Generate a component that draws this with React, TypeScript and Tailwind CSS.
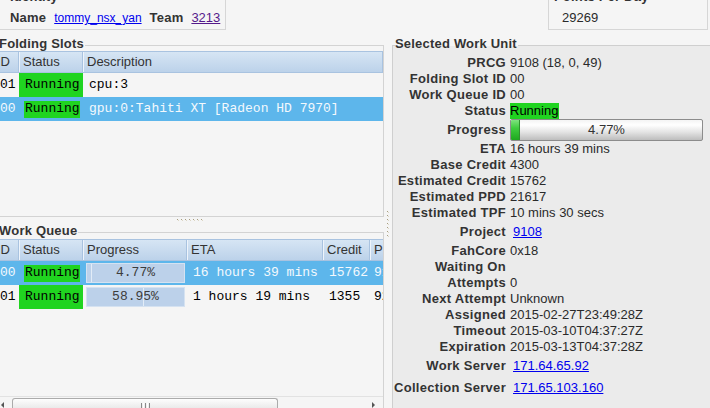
import React from "react";

const MONO = "font-['Liberation_Mono','Courier_New',monospace]";

function Dots({ vertical }: { vertical?: boolean }) {
  const arr = Array.from({ length: 7 });
  return (
    <div className={vertical ? "flex flex-col gap-[3px]" : "flex gap-[3px]"}>
      {arr.map((_, i) => (
        <div key={i} className="w-[1px] h-[1px] bg-[#a89e80] shadow-[1px_1px_0_#dcd6c4]" />
      ))}
    </div>
  );
}

function HeaderCell({ w, children, pl = 3 }: { w: number; children?: React.ReactNode; pl?: number }) {
  return (
    <div
      className="h-full shrink-0 border-l border-l-[#eef4fb] border-r border-r-[#a9c3e0] flex items-center whitespace-nowrap overflow-hidden text-[#333]"
      style={{ width: w, paddingLeft: pl }}
    >
      {children}
    </div>
  );
}

function Status({ selected }: { selected: boolean }) {
  return selected ? (
    <div className="h-full flex items-center pl-[5px]">
      <div className={`bg-[#20d420] h-[17px] w-[56px] flex items-center pl-[1px] text-black ${MONO}`}>Running</div>
    </div>
  ) : (
    <div className={`bg-[#20d420] h-full w-[64px] flex items-center pl-[6px] text-black ${MONO}`}>Running</div>
  );
}

function Cell({ w, children, pl = 6 }: { w: number; children?: React.ReactNode; pl?: number }) {
  return (
    <div className="h-full shrink-0 flex items-center whitespace-nowrap overflow-hidden" style={{ width: w, paddingLeft: pl }}>
      {children}
    </div>
  );
}

function TableBar({ pct, label }: { pct: number; label: string }) {
  return (
    <div className="h-full flex items-center pl-[3px] pr-[2px] w-full">
      <div className="relative w-full h-[20px] bg-[#bcd1ea] border border-[#d5e2f1]">
        <div className="absolute inset-y-0 left-0 border-r border-r-[#e2ecf7]" style={{ width: `${pct}%` }} />
        <div className={`relative h-full flex items-center justify-center text-[#3c3c3c] ${MONO}`}>{label}</div>
      </div>
    </div>
  );
}

function GroupTitle({ children, bg }: { children: React.ReactNode; bg: string }) {
  return (
    <div className={`absolute -top-[10px] leading-[15px] font-bold tracking-[0.2px] text-[#333] pr-[1px] ${bg}`}>
      {children}
    </div>
  );
}

type Row = { label: string; h: number; kind?: "link" | "status" | "progress"; value?: string };

const rows: Row[] = [
  { label: "PRCG", h: 16, value: "9108 (18, 0, 49)" },
  { label: "Folding Slot ID", h: 16, value: "00" },
  { label: "Work Queue ID", h: 16, value: "00" },
  { label: "Status", h: 16, kind: "status" },
  { label: "Progress", h: 22, kind: "progress" },
  { label: "ETA", h: 16, value: "16 hours 39 mins" },
  { label: "Base Credit", h: 16, value: "4300" },
  { label: "Estimated Credit", h: 16, value: "15762" },
  { label: "Estimated PPD", h: 16, value: "21617" },
  { label: "Estimated TPF", h: 16, value: "10 mins 30 secs" },
  { label: "Project", h: 22, kind: "link", value: "9108" },
  { label: "FahCore", h: 16, value: "0x18" },
  { label: "Waiting On", h: 16, value: "" },
  { label: "Attempts", h: 16, value: "0" },
  { label: "Next Attempt", h: 16, value: "Unknown" },
  { label: "Assigned", h: 16, value: "2015-02-27T23:49:28Z" },
  { label: "Timeout", h: 16, value: "2015-03-10T04:37:27Z" },
  { label: "Expiration", h: 16, value: "2015-03-13T04:37:28Z" },
  { label: "Work Server", h: 22, kind: "link", value: "171.64.65.92" },
  { label: "Collection Server", h: 22, kind: "link", value: "171.65.103.160" },
];

function Value({ r }: { r: Row }) {
  if (r.kind === "status")
    return <div className="bg-[#20d420] text-black h-[16px] leading-[16px] pr-[1px]">Running</div>;
  if (r.kind === "progress")
    return (
      <div className="relative w-[193px] h-[22px] rounded-[2px] border border-[#8c8c8c] bg-[linear-gradient(to_bottom,#f4f4f4_0%,#ffffff_25%,#e4e4e4_60%,#bdbdbd_100%)] overflow-hidden">
        <div className="absolute left-0 inset-y-0 w-[9px] border-r border-[#2f8f2f] bg-[linear-gradient(to_bottom,#7fe27f_0%,#3fcc3f_40%,#1fa81f_100%)]" />
        <div className="relative h-full flex items-center justify-center text-[#333]">4.77%</div>
      </div>
    );
  if (r.kind === "link")
    return <span className="ml-[3px] text-[#0000ee] underline">{r.value}</span>;
  return <span>{r.value}</span>;
}

export default function App() {
  return (
    <div className="w-[710px] h-[408px] overflow-hidden bg-[#f5f5f5] text-[13px] leading-[16px] text-[#2a2a2a] font-['Liberation_Sans',Arial,sans-serif] flex flex-col">
      {/* top row */}
      <div className="h-[30px] shrink-0 flex items-start">
        <div className="relative -mt-[2px] -ml-[2px] w-[228px] h-[32px] border border-[#d6d6d6] flex items-baseline gap-[8px] pl-[11px] pt-[11px]">
          <GroupTitle bg="bg-[#f5f5f5]">Identity</GroupTitle>
          <span className="font-bold tracking-[0.2px] text-[#333]">Name</span>
          <span className="text-[12px] text-[#0000ee] underline">tommy_nsx_yan</span>
          <span className="font-bold tracking-[0.2px] text-[#333]">Team</span>
          <span className="text-[#551a8b] underline">3213</span>
        </div>
        <div className="relative ml-auto mr-[2px] -mt-[2px] w-[160px] h-[32px] border border-[#d6d6d6] pl-[13px] pt-[11px]">
          <div className="absolute -top-[10px] left-[4px] leading-[15px] font-bold tracking-[0.2px] text-[#333] bg-[#f5f5f5] px-[1px]">Points Per Day</div>
          <span>29269</span>
        </div>
      </div>

      {/* main */}
      <div className="flex flex-1 min-h-0">
        {/* left column */}
        <div className="w-[389px] -ml-[5px] shrink-0 flex flex-col">
          {/* Folding Slots */}
          <div className="relative mt-[15px] h-[172px] border border-[#d3d3d3] pt-[5px]">
            <div className="absolute -top-[10px] left-[3px] leading-[15px] font-bold tracking-[0.2px] text-[#333] bg-[#f5f5f5] pr-[1px]">Folding Slots</div>
            <div className="overflow-hidden">
              <div className="h-[22px] flex border-y border-[#a9c3e0] bg-[linear-gradient(to_bottom,#d6e5f4,#bcd2ea)]">
                <HeaderCell w={23} pl={0}>ID</HeaderCell>
                <HeaderCell w={64}>Status</HeaderCell>
                <HeaderCell w={300}>Description</HeaderCell>
              </div>
              <div className={`h-[24px] flex text-black ${MONO}`}>
                <Cell w={23} pl={4}>01</Cell>
                <Cell w={64} pl={0}><Status selected={false} /></Cell>
                <Cell w={300}>cpu:3</Cell>
              </div>
              <div className={`h-[24px] flex bg-[#5db6eb] text-[#f4f9fd] ${MONO}`}>
                <Cell w={23} pl={4}>00</Cell>
                <Cell w={64} pl={0}><Status selected={true} /></Cell>
                <Cell w={300}>gpu:0:Tahiti XT [Radeon HD 7970]</Cell>
              </div>
            </div>
          </div>

          {/* splitter */}
          <div className="h-[15px] shrink-0 flex justify-center pt-[2px]">
            <Dots />
          </div>

          {/* Work Queue */}
          <div className="relative flex-1 min-h-0 border-t border-x border-[#d3d3d3] pt-[6px] flex flex-col">
            <div className="absolute -top-[10px] left-[3px] leading-[15px] font-bold tracking-[0.2px] text-[#333] bg-[#f5f5f5] pr-[1px]">Work Queue</div>
            <div className="overflow-hidden">
              <div className="h-[22px] flex border-y border-[#a9c3e0] bg-[linear-gradient(to_bottom,#d6e5f4,#bcd2ea)]">
                <HeaderCell w={23} pl={0}>ID</HeaderCell>
                <HeaderCell w={64}>Status</HeaderCell>
                <HeaderCell w={104}>Progress</HeaderCell>
                <HeaderCell w={136}>ETA</HeaderCell>
                <HeaderCell w={47}>Credit</HeaderCell>
                <HeaderCell w={120}>PRCG</HeaderCell>
              </div>
              <div className={`h-[24px] flex bg-[#5db6eb] text-[#f4f9fd] ${MONO}`}>
                <Cell w={23} pl={4}>00</Cell>
                <Cell w={64} pl={0}><Status selected={true} /></Cell>
                <Cell w={104} pl={0}><TableBar pct={4.77} label="4.77%" /></Cell>
                <Cell w={136}>16 hours 39 mins</Cell>
                <Cell w={47}>15762</Cell>
                <Cell w={120} pl={4}>9108 (18, 0, 49)</Cell>
              </div>
              <div className={`h-[24px] flex text-black ${MONO}`}>
                <Cell w={23} pl={4}>01</Cell>
                <Cell w={64} pl={0}><Status selected={false} /></Cell>
                <Cell w={104} pl={0}><TableBar pct={58.95} label="58.95%" /></Cell>
                <Cell w={136}>1 hours 19 mins</Cell>
                <Cell w={47}>1355</Cell>
                <Cell w={120} pl={4}>9201 (0, 1, 22)</Cell>
              </div>
            </div>
            <div className="flex-1" />
            {/* scrollbar */}
            <div className="h-[12px] shrink-0 border-t border-[#e2e2e2] flex items-start pl-[5px] pr-[4px] pt-[1px]">
              <div className="w-0 h-0 mt-[4px] border-y-[3px] border-y-transparent border-r-[3px] border-r-[#555]" />
              <div className="ml-[8px] w-[266px] h-[12px] rounded-t-[3px] border border-b-0 border-[#ababab] bg-[linear-gradient(to_bottom,#fdfdfd,#e6e6e6)] flex justify-center gap-[1px] pt-[4px]">
                <div className="w-[1px] h-[6px] bg-[#8a8a8a]" />
                <div className="w-[1px] h-[6px] bg-[#fff]" />
                <div className="w-[1px] h-[6px] bg-[#8a8a8a]" />
                <div className="w-[1px] h-[6px] bg-[#fff]" />
                <div className="w-[1px] h-[6px] bg-[#8a8a8a]" />
              </div>
              <div className="flex-1" />
              <div className="w-0 h-0 mt-[4px] mr-[4px] border-y-[3px] border-y-transparent border-l-[3px] border-l-[#555]" />
            </div>
          </div>
        </div>

        {/* vertical splitter */}
        <div className="w-[8px] shrink-0 pl-[3px] pt-[181px]">
          <Dots vertical />
        </div>

        {/* right panel */}
        <div className="relative flex-1 mt-[15px] border-l border-t border-[#cfcfcf] bg-[#ebebeb] pt-[9px]">
          <div className="absolute -top-[10px] left-[2px] leading-[15px] font-bold tracking-[0.2px] text-[#333] pr-[1px] bg-[linear-gradient(to_bottom,#f5f5f5_10px,#ebebeb_10px)]">
            Selected Work Unit
          </div>
          <div className="grid grid-cols-[113px_1fr] gap-x-[4px]">
            {rows.map((r) => (
              <React.Fragment key={r.label}>
                <div className="flex items-center justify-end font-bold tracking-[0.3px] text-[#333] whitespace-nowrap" style={{ height: r.h }}>
                  {r.label}
                </div>
                <div className="flex items-center whitespace-nowrap text-[#2a2a2a]" style={{ height: r.h }}>
                  <Value r={r} />
                </div>
              </React.Fragment>
            ))}
          </div>
        </div>
      </div>
    </div>
  );
}
